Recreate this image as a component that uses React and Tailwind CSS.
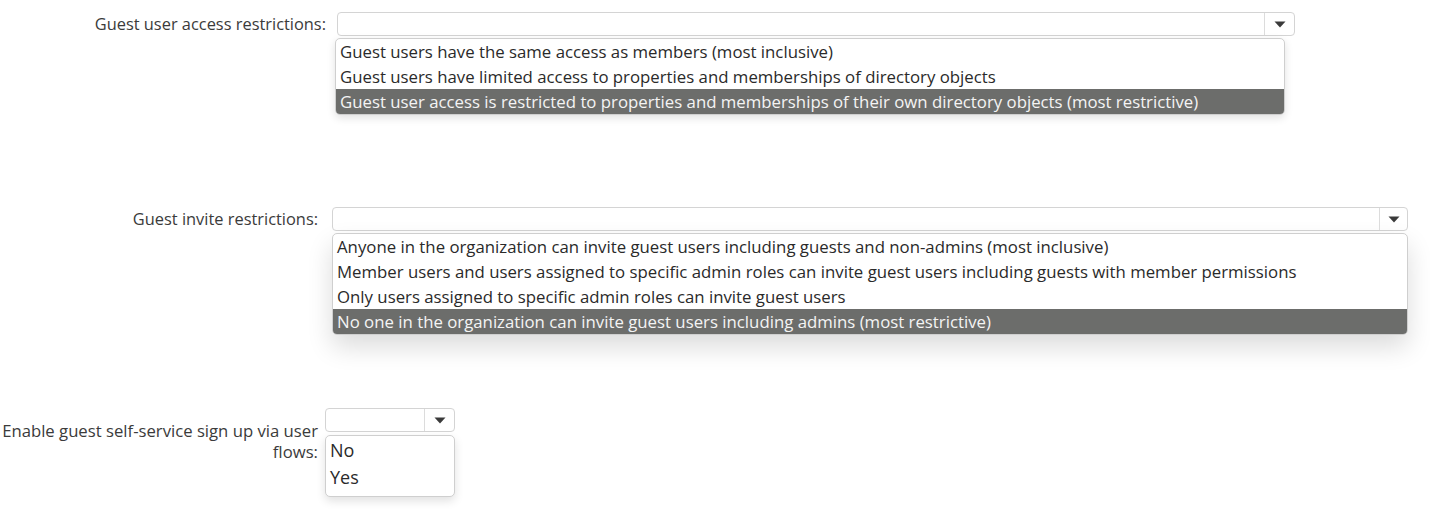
import React from 'react';

const Arrow = () => (
  <svg width="12" height="7" viewBox="0 0 12 7" className="block">
    <path d="M0.5 0.5 L11.5 0.5 L6 6.5 Z" fill="#3a3a3a" />
  </svg>
);

// closed select box with the arrow segment on the right
const SelectBox = ({ arrowWidth = 30 }) => (
  <div className="flex h-[24px] w-full rounded-[4px] border border-[#d4d4d4] bg-white">
    <div className="flex-1" />
    <div
      className="flex items-center justify-center border-l border-[#dcdcdc]"
      style={{ width: arrowWidth }}
    >
      <Arrow />
    </div>
  </div>
);

const OptionList = ({ options, selected, rowClass = 'h-[25px]', listClass = '', textClass = 'text-[16.8px]' }) => (
  <div className={`mt-[2px] overflow-hidden rounded-[5px] border border-[#cfcfcf] bg-white ${listClass}`}>
    {options.map((opt, i) => (
      <div
        key={opt}
        className={`flex items-center whitespace-nowrap px-[4px] ${rowClass} ${textClass} ${
          i === selected ? 'bg-[#6c6d6b] text-[#f4f4f4]' : 'text-[#2a2a2a]'
        }`}
      >
        {opt}
      </div>
    ))}
  </div>
);

const accessOptions = [
  'Guest users have the same access as members (most inclusive)',
  'Guest users have limited access to properties and memberships of directory objects',
  'Guest user access is restricted to properties and memberships of their own directory objects (most restrictive)',
];

const inviteOptions = [
  'Anyone in the organization can invite guest users including guests and non-admins (most inclusive)',
  'Member users and users assigned to specific admin roles can invite guest users including guests with member permissions',
  'Only users assigned to specific admin roles can invite guest users',
  'No one in the organization can invite guest users including admins (most restrictive)',
];

export default function App() {
  return (
    <div
      className="h-[524px] w-[1430px] overflow-hidden bg-white pt-[12px] text-[#3b3b3b]"
      style={{ fontFamily: '"Open Sans", "Noto Sans", sans-serif' }}
    >
      {/* Guest user access */}
      <div className="flex">
        <div className="w-[326px] text-right text-[16.4px] leading-[24px]">
          Guest user access restrictions:
        </div>
        <div className="ml-[9px] w-[960px]">
          <div className="pl-[2px]">
            <SelectBox arrowWidth={30} />
          </div>
          <div className="w-[950px]">
            <OptionList
              options={accessOptions}
              selected={2}
              listClass="shadow-[0_3px_8px_rgba(0,0,0,0.12)]"
            />
          </div>
        </div>
      </div>

      {/* Guest invite */}
      <div className="mt-[92px] flex">
        <div className="w-[318px] text-right text-[16.4px] leading-[23px]">
          Guest invite restrictions:
        </div>
        <div className="ml-[14px] w-[1076px]">
          <SelectBox arrowWidth={28} />
          <OptionList
            options={inviteOptions}
            selected={3}
            listClass="shadow-[0_12px_26px_rgba(0,0,0,0.14)]"
          />
        </div>
      </div>

      {/* Self-service sign up */}
      <div className="mt-[73px] flex">
        <div className="w-[318px] pt-[12px] text-right text-[16.7px] leading-[21px]">
          Enable guest self-service sign up via user
          <br />
          flows:
        </div>
        <div className="ml-[7px] w-[130px]">
          <SelectBox arrowWidth={30} />
          <div className="mt-[3px]">
            <OptionList
              options={['No', 'Yes']}
              selected={-1}
              rowClass="h-[27px]"
              textClass="text-[18px]"
              listClass="pt-[1px] pb-[5px] shadow-[0_4px_10px_rgba(0,0,0,0.12)]"
            />
          </div>
        </div>
      </div>
    </div>
  );
}
